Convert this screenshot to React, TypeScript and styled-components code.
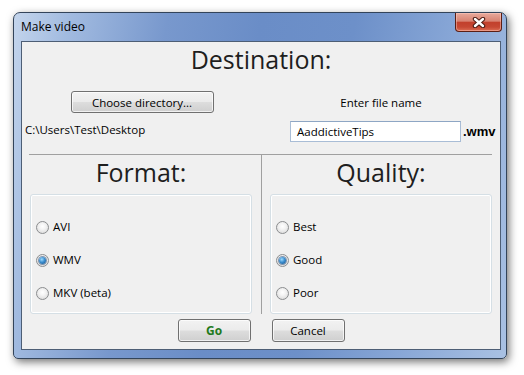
import React from 'react';
import styled, { createGlobalStyle } from 'styled-components';

const GlobalStyle = createGlobalStyle`
    html, body {
        margin: 0;
        padding: 0;
        background: #ffffff;
    }
    body {
        font-family: "Open Sans", "Noto Sans", "DejaVu Sans", sans-serif;
        font-size: 11.5px;
        color: #000;
    }
`;

const Page = styled.div`
    width: 524px;
    height: 375px;
    box-sizing: border-box;
    padding: 12px 0 0 13px;
`;

const Window = styled.div`
    width: 494px;
    height: 347px;
    box-sizing: border-box;
    border: 1px solid #33445a;
    border-radius: 7px 7px 5px 5px;
    background: linear-gradient(100deg, #c4d5ec 0%, #a2bbe0 10%, #7898cd 28%, #6a8dc7 45%, #6d90c9 62%, #87a6d6 80%, #a9c1e3 100%);
    box-shadow: 2px 3px 9px rgba(0, 0, 0, 0.55);
    display: flex;
    flex-direction: column;
`;

const TitleBar = styled.div`
    height: 28px;
    display: flex;
    justify-content: space-between;
    align-items: flex-start;
    padding-left: 7px;
`;

const Title = styled.div`
    margin-top: 6px;
    line-height: 16px;
    font-size: 12px;
    color: #000;
`;

const CloseButton = styled.div`
    width: 47px;
    height: 19px;
    box-sizing: border-box;
    margin-right: 4px;
    border: 1px solid #5b1e14;
    border-top: none;
    border-radius: 0 0 4px 4px;
    background: linear-gradient(#e8aa9c 0%, #d88372 45%, #c2402c 52%, #c64833 78%, #dc6e55 100%);
    box-shadow: inset 0 0 0 1px rgba(255, 210, 200, 0.45);
    display: flex;
    align-items: center;
    justify-content: center;
`;

const Body = styled.div`
    flex: 1;
    display: flex;
    padding: 0 5px 8px 7px;
`;

const Client = styled.div`
    flex: 1;
    border: 1px solid #4d5e75;
    background: #f0f0f0;
    display: flex;
    flex-direction: column;
`;

const Heading = styled.div`
    font-size: 25px;
    line-height: 34px;
    height: 34px;
    text-align: center;
    color: #1e1e1e;
`;

const TopRow = styled.div`
    height: 78px;
    display: grid;
    grid-template-columns: 240px 238px;
`;

const LeftTop = styled.div`
    display: flex;
    flex-direction: column;
    align-items: center;
`;

const RightTop = styled.div`
    display: flex;
    flex-direction: column;
`;

const PushButton = styled.button<{ $w: number; $primary?: boolean }>`
    width: ${p => p.$w}px;
    height: ${p => (p.$primary !== undefined ? 23 : 22)}px;
    padding: 0;
    box-sizing: border-box;
    border: 1px solid #707070;
    border-radius: 3px;
    background: linear-gradient(#f2f2f2 0%, #ebebeb 48%, #dddddd 52%, #cfcfcf 100%);
    box-shadow: inset 0 0 0 1px rgba(255, 255, 255, 0.7);
    font-family: "Open Sans", "Noto Sans", sans-serif;
    font-size: ${p => (p.$primary ? 12 : 11.5)}px;
    font-weight: ${p => (p.$primary ? 700 : 400)};
    color: ${p => (p.$primary ? '#227a1c' : '#000')};
`;

const ChooseButton = styled(PushButton)`
    margin-top: 15px;
`;

const PathText = styled.div`
    align-self: flex-start;
    margin-top: 9px;
    padding-left: 3px;
    line-height: 16px;
`;

const FileLabel = styled.div`
    margin-top: 19px;
    line-height: 16px;
    text-align: center;
`;

const FileRow = styled.div`
    margin-top: 10px;
    padding-left: 28px;
    display: flex;
    align-items: center;
    gap: 2px;
`;

const FileInput = styled.div`
    width: 171px;
    height: 21px;
    box-sizing: border-box;
    border: 1px solid #a9bdd6;
    border-top-color: #8ea6c4;
    background: #fff;
    padding-left: 6px;
    line-height: 19px;
`;

const Ext = styled.div`
    font-family: "Liberation Sans", Arial, sans-serif;
    font-weight: 700;
    font-size: 13px;
`;

const Separator = styled.div`
    height: 1px;
    margin: 0 8px 0 7px;
    background: #a0a0a0;
`;

const BottomRow = styled.div`
    height: 159px;
    display: grid;
    grid-template-columns: 240px 238px;
`;

const Column = styled.div<{ $divider?: boolean }>`
    box-sizing: border-box;
    display: flex;
    flex-direction: column;
    border-right: ${p => (p.$divider ? '1px solid #a0a0a0' : 'none')};
    padding: ${p => (p.$divider ? '0 9px 0 8px' : '0 8px')};
`;

const GroupBox = styled.div`
    margin-top: 5px;
    flex: 1;
    border: 1px solid #d5dfe5;
    border-radius: 3px;
    box-shadow: inset 0 0 0 1px #ffffff;
    display: flex;
    flex-direction: column;
    gap: 17px;
    padding: 24px 0 0 5px;
`;

const RadioRow = styled.label`
    display: flex;
    align-items: center;
    gap: 4px;
    line-height: 16px;
`;

const RadioDot = styled.span<{ $checked?: boolean }>`
    width: 13px;
    height: 13px;
    box-sizing: border-box;
    border-radius: 50%;
    border: 1px solid #8b8d8f;
    background: radial-gradient(circle at 50% 40%, #ffffff 0%, #f4f4f4 35%, #d4d4d4 100%);
    display: flex;
    align-items: center;
    justify-content: center;

    &::after {
        content: '';
        display: ${p => (p.$checked ? 'block' : 'none')};
        width: 7px;
        height: 7px;
        border-radius: 50%;
        background: radial-gradient(circle at 40% 35%, #9fdcff 0%, #3d8fd0 45%, #0d4c86 100%);
        box-shadow: 0 0 0 1px rgba(20, 60, 110, 0.5);
    }
`;

const ButtonRow = styled.div`
    margin-top: 5px;
    display: flex;
    justify-content: center;
    gap: 21px;
`;

type Option = { label: string; checked?: boolean };

const formats: Option[] = [{ label: 'AVI' }, { label: 'WMV', checked: true }, { label: 'MKV (beta)' }];
const qualities: Option[] = [{ label: 'Best' }, { label: 'Good', checked: true }, { label: 'Poor' }];

const RadioGroup: React.FC<{ options: Option[] }> = ({ options }) => (
    <GroupBox>
        {options.map(o => (
            <RadioRow key={o.label}>
                <RadioDot $checked={o.checked} />
                <span>{o.label}</span>
            </RadioRow>
        ))}
    </GroupBox>
);

const App: React.FC = () => {
    return (
        <Page>
            <GlobalStyle />
            <Window>
                <TitleBar>
                    <Title>Make video</Title>
                    <CloseButton>
                        <svg width="14" height="11" viewBox="0 0 14 11">
                            <path d="M3 2 L11 9 M11 2 L3 9" stroke="#4a1a12" strokeWidth="4.4" strokeLinecap="round" fill="none" />
                            <path d="M3 2 L11 9 M11 2 L3 9" stroke="#ffffff" strokeWidth="2.4" strokeLinecap="round" fill="none" />
                        </svg>
                    </CloseButton>
                </TitleBar>
                <Body>
                    <Client>
                        <Heading>Destination:</Heading>
                        <TopRow>
                            <LeftTop>
                                <ChooseButton $w={143}>Choose directory...</ChooseButton>
                                <PathText>C:\Users\Test\Desktop</PathText>
                            </LeftTop>
                            <RightTop>
                                <FileLabel>Enter file name</FileLabel>
                                <FileRow>
                                    <FileInput>AaddictiveTips</FileInput>
                                    <Ext>.wmv</Ext>
                                </FileRow>
                            </RightTop>
                        </TopRow>
                        <Separator />
                        <BottomRow>
                            <Column $divider>
                                <Heading>Format:</Heading>
                                <RadioGroup options={formats} />
                            </Column>
                            <Column>
                                <Heading>Quality:</Heading>
                                <RadioGroup options={qualities} />
                            </Column>
                        </BottomRow>
                        <ButtonRow>
                            <PushButton $w={73} $primary>Go</PushButton>
                            <PushButton $w={73} $primary={false}>Cancel</PushButton>
                        </ButtonRow>
                    </Client>
                </Body>
            </Window>
        </Page>
    );
};

export default App;
